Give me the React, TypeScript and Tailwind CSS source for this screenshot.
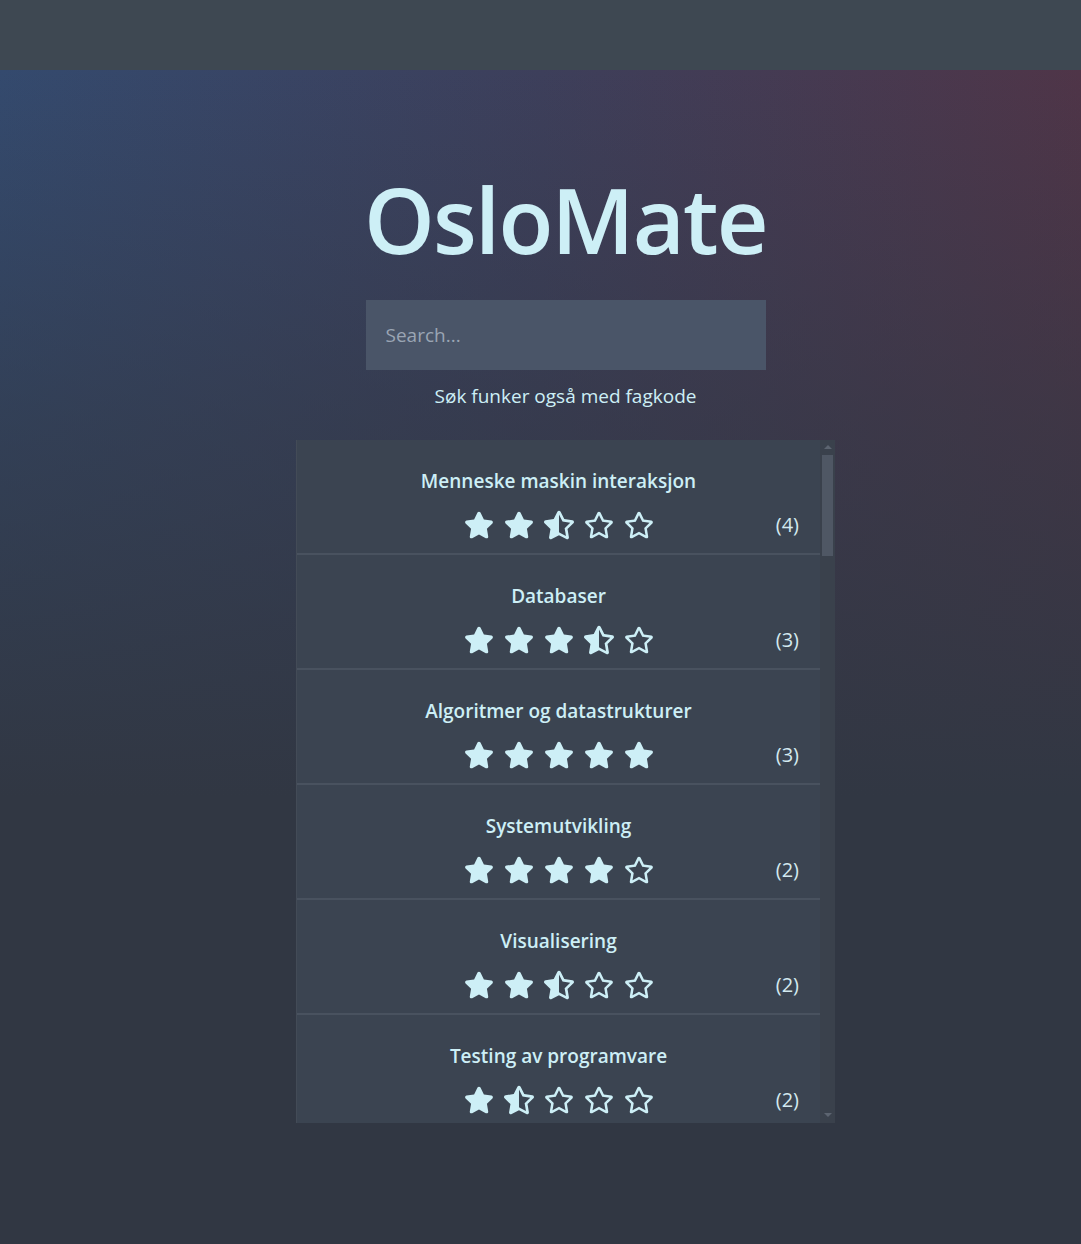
import { FaStar, FaRegStar, FaStarHalfAlt } from "react-icons/fa";

interface Course {
  name: string;
  rating: number;
  count: number;
}

const courses: Course[] = [
  { name: "Menneske maskin interaksjon", rating: 2.5, count: 4 },
  { name: "Databaser", rating: 3.5, count: 3 },
  { name: "Algoritmer og datastrukturer", rating: 5, count: 3 },
  { name: "Systemutvikling", rating: 4, count: 2 },
  { name: "Visualisering", rating: 2.5, count: 2 },
  { name: "Testing av programvare", rating: 1.5, count: 2 },
  { name: "Webutvikling", rating: 4, count: 2 },
  { name: "Programmering", rating: 3, count: 2 },
  { name: "Diskret matematikk", rating: 2, count: 2 },
  { name: "Operativsystemer", rating: 3.5, count: 1 },
  { name: "Datanettverk og skytjenester", rating: 3, count: 1 },
  { name: "Webprogrammering", rating: 4.5, count: 1 },
  { name: "Apputvikling", rating: 4, count: 1 },
  { name: "Informasjonssikkerhet", rating: 3, count: 1 },
  { name: "Matematikk for IT", rating: 2, count: 1 },
  { name: "Teknologi og samfunn", rating: 2.5, count: 1 },
  { name: "Prosjektledelse", rating: 3, count: 1 },
  { name: "Universell utforming", rating: 4, count: 1 },
  { name: "Kunstig intelligens", rating: 5, count: 1 },
  { name: "Maskinlæring", rating: 4.5, count: 1 },
  { name: "Bachelorprosjekt", rating: 4, count: 1 },
  { name: "Innovasjon og entreprenørskap", rating: 2, count: 1 },
  { name: "Programutvikling", rating: 3.5, count: 1 },
  { name: "Statistikk", rating: 2.5, count: 1 },
  { name: "Datamaskinarkitektur", rating: 3, count: 1 },
  { name: "Smidig utvikling", rating: 4, count: 1 },
  { name: "Interaksjonsdesign", rating: 3.5, count: 1 },
  { name: "Digital forretningsforståelse", rating: 2, count: 1 },
  { name: "Skytjenester", rating: 4, count: 1 },
  { name: "Sikker programvareutvikling", rating: 3, count: 1 },
  { name: "Dataanalyse", rating: 4, count: 1 },
  { name: "Big data", rating: 3.5, count: 1 },
  { name: "Informasjonsarkitektur", rating: 3, count: 1 },
  { name: "Etisk hacking", rating: 5, count: 1 },
  { name: "Spillutvikling", rating: 4.5, count: 1 },
  { name: "Linux og kommandolinje", rating: 4, count: 1 },
  { name: "IT-ledelse", rating: 2, count: 1 },
  { name: "Mobil interaksjon", rating: 3, count: 1 },
];

const Stars: React.FC<{ rating: number }> = ({ rating }) => (
  <div className="flex gap-[10px]">
    {[1, 2, 3, 4, 5].map((i) =>
      rating >= i ? (
        <FaStar key={i} size={30} />
      ) : rating >= i - 0.5 ? (
        <FaStarHalfAlt key={i} size={30} />
      ) : (
        <FaRegStar key={i} size={30} />
      )
    )}
  </div>
);

const CourseRow: React.FC<{ course: Course }> = ({ course }) => (
  <div className="flex h-[115px] shrink-0 flex-col items-center border-b-2 border-[#49525f] bg-[#3b4451] pt-[28px]">
    <span className="text-[19px] leading-[26px] font-semibold">{course.name}</span>
    <div className="mt-[16px] grid w-full grid-cols-[1fr_auto_1fr] items-center">
      <span />
      <Stars rating={course.rating} />
      <span className="justify-self-end pr-[21px] text-[20px] text-[#d3e9ef]">
        ({course.count})
      </span>
    </div>
  </div>
);

const FakeScrollbar = () => (
  <div className="flex w-[15px] shrink-0 flex-col items-center bg-[#3a414c]">
    <div className="flex h-[15px] items-center justify-center">
      <div className="h-0 w-0 border-x-[4px] border-b-[4px] border-x-transparent border-b-[#5c6470]" />
    </div>
    <div className="h-[101px] w-[11px] bg-[#4f5764]" />
    <div className="flex-1" />
    <div className="flex h-[15px] items-center justify-center">
      <div className="h-0 w-0 border-x-[4px] border-t-[4px] border-x-transparent border-t-[#5c6470]" />
    </div>
  </div>
);

export default function App() {
  return (
    <div className="flex min-h-[1244px] flex-col bg-[#313743] font-['Open_Sans',sans-serif] text-[#cdeff6]">
      <header className="h-[70px] bg-[#3e4852]" />

      <main className="flex flex-1 flex-col items-center bg-[linear-gradient(to_bottom,rgba(49,55,67,0)_0%,rgba(49,55,67,0.55)_30%,#313743_62%),linear-gradient(to_right,#344a6e,#3d3f5b_50%,#4f3548)] pl-[50px]">
        <h1 className="mt-[104px] text-[90px] leading-none font-semibold tracking-[-0.02em]">
          OsloMate
        </h1>

        <input
          type="text"
          placeholder="Search..."
          className="mt-[36px] h-[70px] w-[400px] bg-[#4a5568] px-[20px] text-[19px] text-[#e2e8f0] outline-none placeholder:text-[#9aa5b4]"
        />
        <p className="mt-[12px] text-[19px]">Søk funker også med fagkode</p>

        <div className="mt-[29px] flex h-[683px] w-[539px] border-l border-[#434b57] bg-[#3b4451]">
          <div className="flex flex-1 flex-col overflow-y-auto [scrollbar-width:none]">
            {courses.map((c) => (
              <CourseRow key={c.name} course={c} />
            ))}
          </div>
          <FakeScrollbar />
        </div>
      </main>
    </div>
  );
}
